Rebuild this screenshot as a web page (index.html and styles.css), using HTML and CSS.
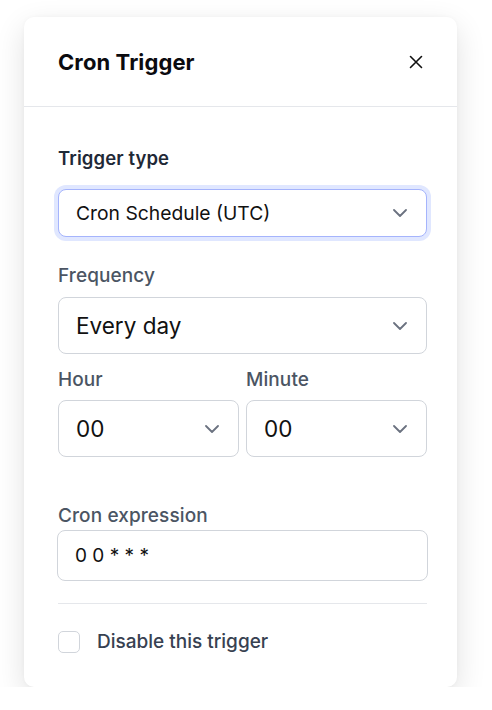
FILE: index.html
```html
<!DOCTYPE html>
<html>
<head>
<meta charset="utf-8">
<link rel="stylesheet" href="styles.css">
</head>
<body>
<div class="panel">
  <div class="header">
    <h1 class="title">Cron Trigger</h1>
    <button class="close" aria-label="Close">
      <svg width="14" height="14" viewBox="0 0 14 14"><path d="M1.5 1.5 L12.5 12.5 M12.5 1.5 L1.5 12.5" stroke="#111" stroke-width="1.6" stroke-linecap="round"/></svg>
    </button>
  </div>
  <div class="body">
    <div class="label strong">Trigger type</div>
    <div class="select focus">
      <span class="value small">Cron Schedule (UTC)</span>
      <svg class="chev" width="14" height="8" viewBox="0 0 14 8"><path d="M1 1 L7 7 L13 1" fill="none" stroke="#6b7280" stroke-width="1.8" stroke-linecap="round" stroke-linejoin="round"/></svg>
    </div>

    <div class="label freq">Frequency</div>
    <div class="select big">
      <span class="value">Every day</span>
      <svg class="chev" width="14" height="8" viewBox="0 0 14 8"><path d="M1 1 L7 7 L13 1" fill="none" stroke="#6b7280" stroke-width="1.8" stroke-linecap="round" stroke-linejoin="round"/></svg>
    </div>

    <div class="pair">
      <div class="col">
        <div class="label hm">Hour</div>
        <div class="select big">
          <span class="value">00</span>
          <svg class="chev" width="14" height="8" viewBox="0 0 14 8"><path d="M1 1 L7 7 L13 1" fill="none" stroke="#6b7280" stroke-width="1.8" stroke-linecap="round" stroke-linejoin="round"/></svg>
        </div>
      </div>
      <div class="col">
        <div class="label hm">Minute</div>
        <div class="select big">
          <span class="value">00</span>
          <svg class="chev" width="14" height="8" viewBox="0 0 14 8"><path d="M1 1 L7 7 L13 1" fill="none" stroke="#6b7280" stroke-width="1.8" stroke-linecap="round" stroke-linejoin="round"/></svg>
        </div>
      </div>
    </div>

    <div class="label cron">Cron expression</div>
    <div class="input">0 0 * * *</div>

    <div class="divider"></div>

    <label class="check">
      <span class="box"></span>
      <span class="check-text">Disable this trigger</span>
    </label>
  </div>
</div>
</body>
</html>
```

FILE: styles.css
```css
* { box-sizing: border-box; }
html, body { margin: 0; padding: 0; background: #ffffff; }
body { font-family: Inter, "Noto Sans", sans-serif; color: #111827; }

.panel {
  margin: 17px 0 0 24px;
  width: 433px;
  height: 670px;
  background: #fff;
  border-radius: 10px;
  box-shadow: 0 10px 30px rgba(0,0,0,0.12), 0 0 4px rgba(0,0,0,0.03);
}

.header {
  height: 90px;
  padding: 0 34px 0 34px;
  display: flex;
  align-items: center;
  justify-content: space-between;
  border-bottom: 1px solid #e5e7eb;
}
.title {
  margin: 0;
  font-size: 22px;
  font-weight: 700;
  color: #0b0b0f;
  letter-spacing: 0.1px;
}
.close {
  border: 0;
  background: none;
  padding: 0;
  width: 14px;
  height: 14px;
  display: flex;
}

.body {
  padding: 39px 30px 0 34px;
}

.label {
  font-size: 19px;
  font-weight: 500;
  line-height: 24px;
  color: #4b5563;
  letter-spacing: 0.1px;
}
.label.strong {
  font-weight: 600;
  font-size: 18.5px;
  color: #1f2937;
  margin-bottom: 19px;
}
.label.freq { margin-top: 27px; margin-bottom: 9px; }
.label.hm { margin-top: 14px; margin-bottom: 8px; }
.label.cron { margin-top: 47px; margin-bottom: 2px; }

.select {
  display: flex;
  align-items: center;
  justify-content: space-between;
  border: 1px solid #d1d5db;
  border-radius: 8px;
  padding: 0 19px 0 17px;
  background: #fff;
}
.select.focus {
  height: 48px;
  border-color: #a5b4fc;
  box-shadow: 0 0 0 4px #e0e7ff;
}
.select.big { height: 57px; }
.value { font-size: 22.5px; color: #111; }
.value.small { font-size: 19.3px; }

.pair {
  display: grid;
  grid-template-columns: 1fr 1fr;
  gap: 7px;
}

.input {
  height: 51px;
  border: 1px solid #d1d5db;
  border-radius: 8px;
  padding: 0 17px;
  display: flex;
  align-items: center;
  font-size: 19px;
  color: #111;
  margin-left: -1px;
  margin-right: -1px;
}

.divider {
  height: 1px;
  background: #e5e7eb;
  margin-top: 22px;
}

.check {
  display: flex;
  align-items: center;
  margin-top: 26px;
}
.box {
  width: 22px;
  height: 22px;
  border: 1px solid #d1d5db;
  border-radius: 5px;
  margin-right: 17px;
}
.check-text {
  font-size: 19px;
  font-weight: 500;
  color: #374151;
}
```
